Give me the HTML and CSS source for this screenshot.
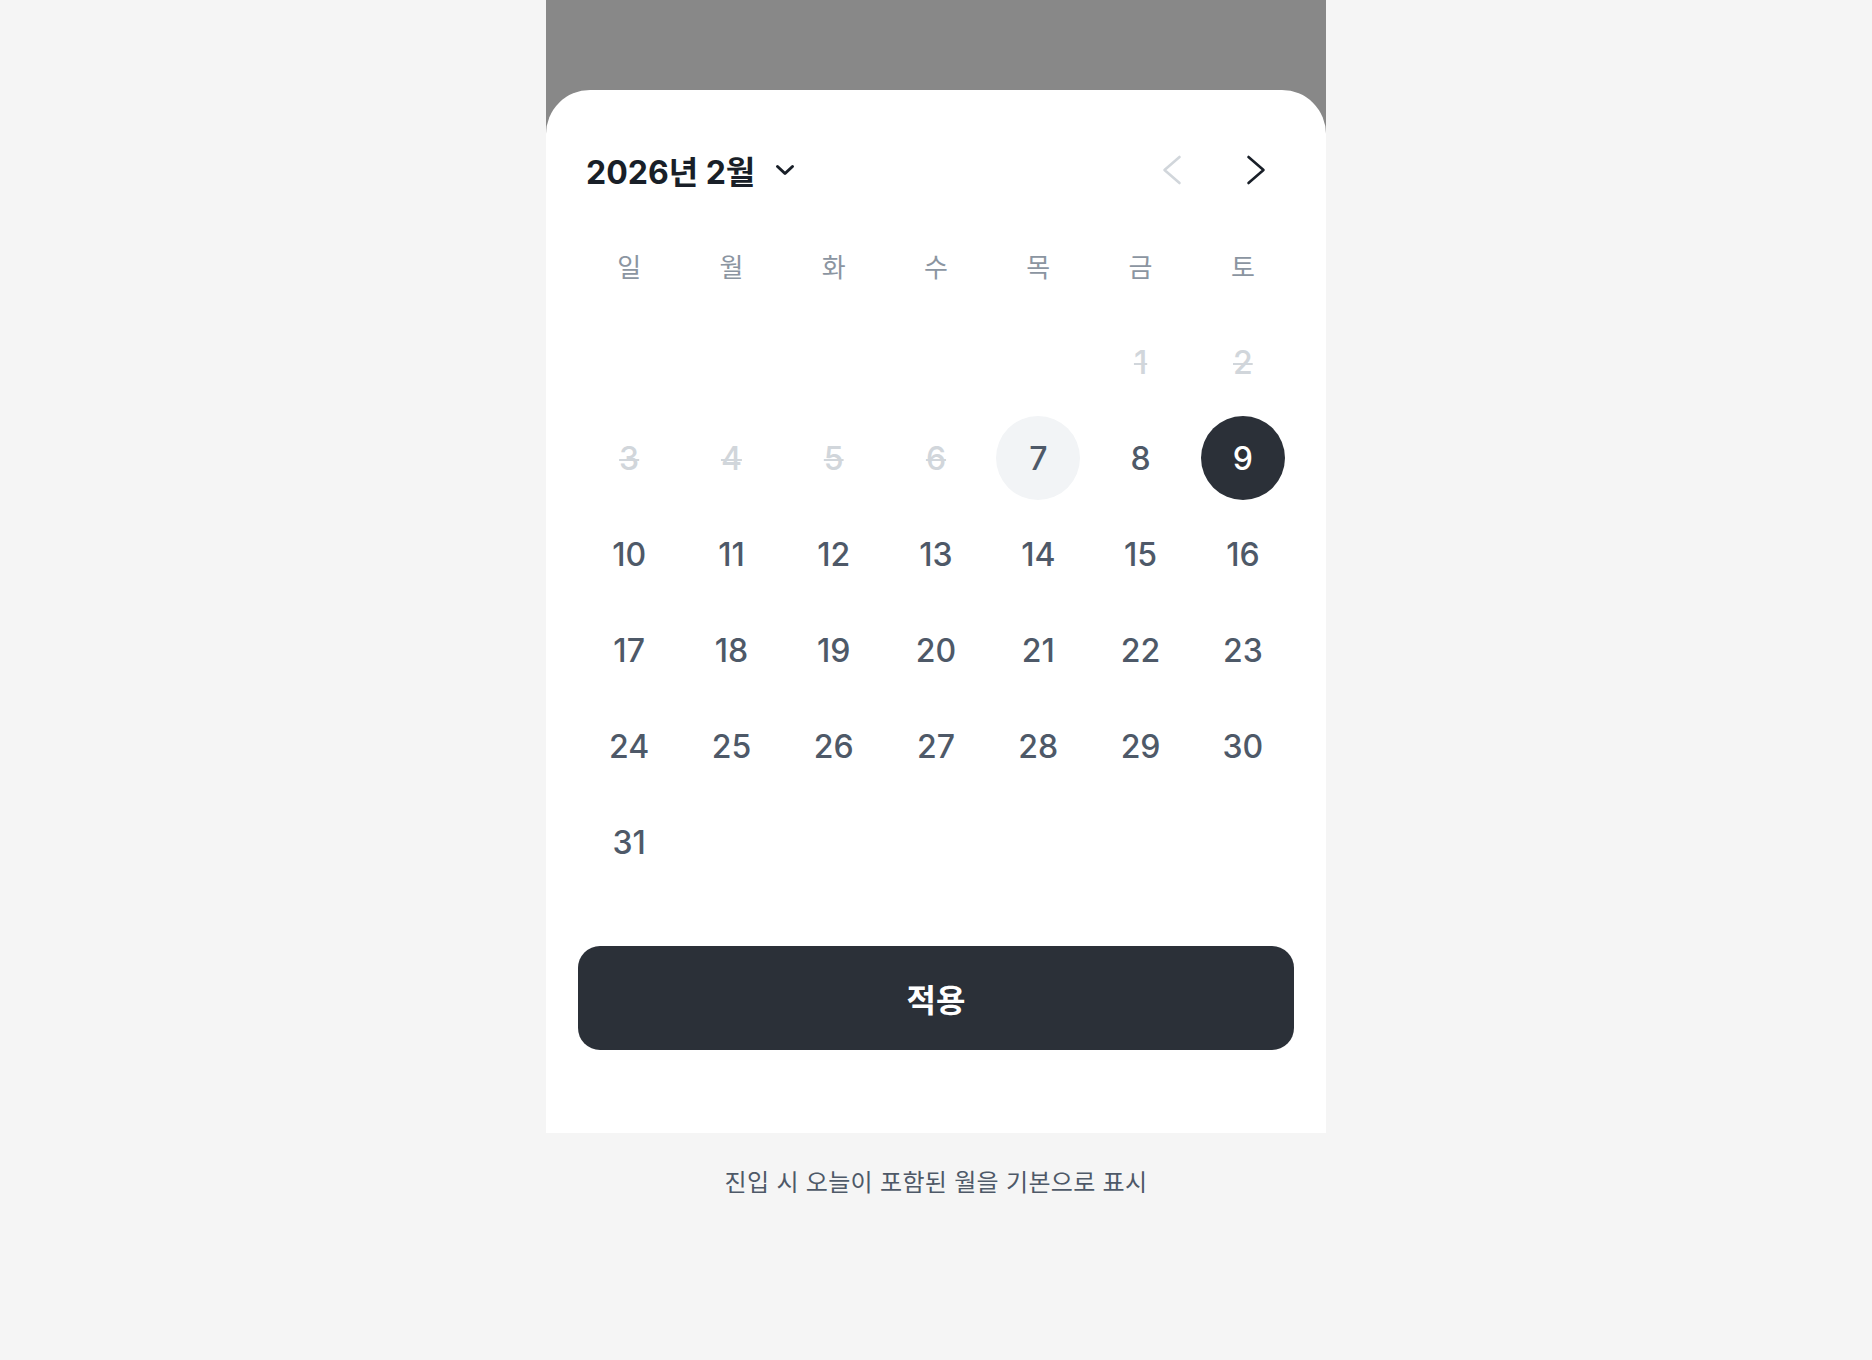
FILE: index.html
```html
<!DOCTYPE html>
<html lang="ko">
<head>
<meta charset="utf-8">
<title>날짜 선택</title>
<link rel="stylesheet" href="styles.css">
</head>
<body>
<div class="stage">
  <div class="phone">
    <div class="sheet">
      <div class="header">
        <button class="month-btn" type="button">
          <span class="month-title">2026년 2월</span>
          <svg class="caret" width="20" height="12" viewBox="0 0 20 12"><path d="M2.5 2.5 L10 9.5 L17.5 2.5" fill="none" stroke="#191f28" stroke-width="3" stroke-linecap="round" stroke-linejoin="round"/></svg>
        </button>
        <div class="nav">
          <button class="nav-btn" type="button" aria-label="이전 달">
            <svg width="24" height="32" viewBox="0 0 24 32"><path d="M19.5 3 L4.5 16 L19.5 29" fill="none" stroke="#d1d6db" stroke-width="2.6" stroke-linecap="round" stroke-linejoin="round"/></svg>
          </button>
          <button class="nav-btn" type="button" aria-label="다음 달">
            <svg width="24" height="32" viewBox="0 0 24 32"><path d="M4.5 3 L19.5 16 L4.5 29" fill="none" stroke="#191f28" stroke-width="2.6" stroke-linecap="round" stroke-linejoin="round"/></svg>
          </button>
        </div>
      </div>

      <div class="grid">
        <div class="wd">일</div><div class="wd">월</div><div class="wd">화</div><div class="wd">수</div><div class="wd">목</div><div class="wd">금</div><div class="wd">토</div>

        <div class="day"></div><div class="day"></div><div class="day"></div><div class="day"></div><div class="day"></div>
        <div class="day"><span class="num off">1</span></div>
        <div class="day"><span class="num off">2</span></div>

        <div class="day"><span class="num off">3</span></div>
        <div class="day"><span class="num off">4</span></div>
        <div class="day"><span class="num off">5</span></div>
        <div class="day"><span class="num off">6</span></div>
        <div class="day"><span class="num today">7</span></div>
        <div class="day"><span class="num">8</span></div>
        <div class="day"><span class="num selected">9</span></div>

        <div class="day"><span class="num">10</span></div>
        <div class="day"><span class="num">11</span></div>
        <div class="day"><span class="num">12</span></div>
        <div class="day"><span class="num">13</span></div>
        <div class="day"><span class="num">14</span></div>
        <div class="day"><span class="num">15</span></div>
        <div class="day"><span class="num">16</span></div>

        <div class="day"><span class="num">17</span></div>
        <div class="day"><span class="num">18</span></div>
        <div class="day"><span class="num">19</span></div>
        <div class="day"><span class="num">20</span></div>
        <div class="day"><span class="num">21</span></div>
        <div class="day"><span class="num">22</span></div>
        <div class="day"><span class="num">23</span></div>

        <div class="day"><span class="num">24</span></div>
        <div class="day"><span class="num">25</span></div>
        <div class="day"><span class="num">26</span></div>
        <div class="day"><span class="num">27</span></div>
        <div class="day"><span class="num">28</span></div>
        <div class="day"><span class="num">29</span></div>
        <div class="day"><span class="num">30</span></div>

        <div class="day"><span class="num">31</span></div>
      </div>

      <button class="apply" type="button">적용</button>
    </div>
  </div>
  <p class="caption">진입 시 오늘이 포함된 월을 기본으로 표시</p>
</div>
</body>
</html>
```

FILE: styles.css
```css
* { box-sizing: border-box; }

html, body {
  margin: 0;
  padding: 0;
  background: #f5f5f5;
}

body {
  font-family: "Inter", "Noto Sans CJK KR", sans-serif;
  min-height: 1360px;
}

.stage {
  display: flex;
  flex-direction: column;
  align-items: center;
}

.phone {
  width: 780px;
  background: #888888;
  padding-top: 90px;
}

.sheet {
  background: #ffffff;
  border-radius: 44px 44px 0 0;
  padding: 0 32px 83px;
  display: flex;
  flex-direction: column;
}

.header {
  height: 114px;
  padding: 46px 10px 0 8px;
  display: flex;
  align-items: center;
  justify-content: space-between;
}

.header > * { height: 66px; }

.month-btn {
  display: flex;
  align-items: center;
  gap: 20px;
  border: 0;
  background: none;
  padding: 0;
  font: inherit;
  cursor: pointer;
}

.month-title {
  font-size: 32px;
  font-weight: 700;
  color: #191f28;
}

.caret { display: block; }

.nav {
  display: flex;
  align-items: center;
  gap: 28px;
}

.nav-btn {
  width: 56px;
  height: 56px;
  border: 0;
  background: none;
  padding: 0;
  display: flex;
  align-items: center;
  justify-content: center;
  cursor: pointer;
}

.nav-btn svg { display: block; }

.grid {
  margin-top: 14px;
  display: grid;
  grid-template-columns: repeat(7, 1fr);
  grid-auto-rows: 96px;
}

.wd {
  display: flex;
  align-items: center;
  justify-content: center;
  font-size: 26px;
  color: #8b95a1;
  padding-bottom: 2px;
}

.day {
  display: flex;
  align-items: center;
  justify-content: center;
}

.num {
  width: 84px;
  height: 84px;
  border-radius: 50%;
  display: flex;
  align-items: center;
  justify-content: center;
  font-size: 32px;
  font-weight: 500;
  color: #4e5968;
}

.num.off {
  color: #d1d6db;
  text-decoration: line-through;
  text-decoration-thickness: 2px;
}

.num.today { background: #f2f4f6; }

.num.selected {
  background: #2b3038;
  color: #ffffff;
}

.apply {
  margin-top: 56px;
  height: 104px;
  width: 100%;
  border: 0;
  border-radius: 22px;
  background: #2b3038;
  color: #ffffff;
  font-family: "Inter", "Noto Sans CJK KR", sans-serif;
  font-size: 32px;
  font-weight: 700;
  cursor: pointer;
}

.caption {
  margin: 33px 0 0;
  font-size: 24px;
  letter-spacing: 0.3px;
  line-height: 34px;
  color: #4e5968;
}
```
